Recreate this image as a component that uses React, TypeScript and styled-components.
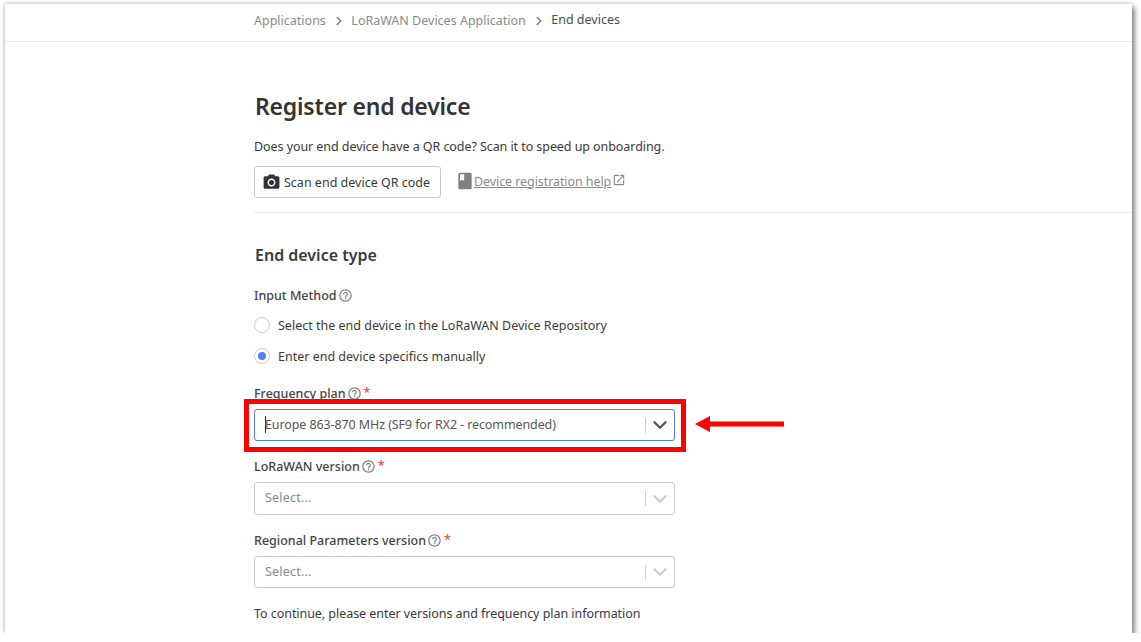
import styled, { createGlobalStyle } from 'styled-components';
import { ChevronDown, ChevronRight } from 'lucide-react';
import { MdBook, MdHelpOutline, MdOpenInNew, MdPhotoCamera } from 'react-icons/md';

const GlobalStyle = createGlobalStyle`
  html, body {
    margin: 0;
    padding: 0;
    background: #fff;
    overflow: hidden;
  }
  * { box-sizing: border-box; }
`;

const Frame = styled.div`
  width: 1127px;
  height: 629px;
  margin: 4px 0 0 5px;
  background: #fff;
  box-shadow: 3px 3px 5px rgba(0, 0, 0, 0.45), -1px -1px 4px rgba(0, 0, 0, 0.2);
  overflow: hidden;
  font-family: 'Noto Sans', sans-serif;
  font-size: 12.5px;
  color: #3a3a3a;
`;

const Breadcrumbs = styled.nav`
  height: 38px;
  padding: 9px 0 0 249px;
  border-bottom: 1px solid #e9e9e9;
  display: flex;
  align-items: flex-start;
  line-height: 16px;
`;

const Crumb = styled.span<{ $current?: boolean }>`
  color: ${p => (p.$current ? '#4a4a4a' : '#8a8a8a')};
  position: relative;
  top: ${p => (p.$current ? '-1px' : '0')};
`;

const CrumbSep = styled.span`
  display: flex;
  width: 25.5px;
  height: 16px;
  align-items: center;
  justify-content: center;
  color: #777;
`;

const Main = styled.main`
  padding-left: 249px;
`;

const Title = styled.h1`
  margin: 48px 0 0 1px;
  font-size: 23px;
  line-height: 32px;
  font-weight: 600;
  letter-spacing: -0.2px;
  color: #333;
`;

const Lead = styled.p`
  margin: 16px 0 0;
  line-height: 18px;
  letter-spacing: -0.07px;
`;

const ActionRow = styled.div`
  display: flex;
  align-items: flex-start;
  margin-top: 10px;
  padding-bottom: 14px;
  border-bottom: 1px solid #e9e9e9;
`;

const ScanButton = styled.button`
  width: 187px;
  height: 32px;
  padding: 0 0 0 7px;
  display: flex;
  align-items: center;
  gap: 3px;
  background: #fff;
  border: 1px solid #ccc;
  border-radius: 3px;
  font: inherit;
  color: #3a3a3a;
`;

const HelpLink = styled.a`
  display: flex;
  align-items: center;
  margin: 7px 0 0 14px;
  height: 16px;
  color: #8a8a8a;
`;

const HelpText = styled.span`
  margin: 0 1px 0 -1px;
  letter-spacing: -0.08px;
  text-decoration: underline;
`;

const LinkOutIcon = styled(MdOpenInNew)`
  margin-top: -3px;
`;

const SectionTitle = styled.h2`
  margin: 30px 0 0 1px;
  font-size: 16px;
  line-height: 24px;
  font-weight: 600;
  color: #3a3a3a;
`;

const Label = styled.div<{ $top: number }>`
  display: flex;
  align-items: center;
  gap: 1px;
  margin-top: ${p => p.$top}px;
  height: 18px;
  font-weight: 500;
  color: #444;
`;

const HelpIcon = styled(MdHelpOutline)`
  color: #808080;
`;

const Required = styled.span`
  margin-left: 1px;
  color: #f0484b;
  line-height: 14px;
`;

const RadioRow = styled.label<{ $top: number }>`
  display: flex;
  align-items: center;
  gap: 8px;
  height: 18px;
  margin-top: ${p => p.$top}px;
`;

const RadioCircle = styled.span<{ $checked?: boolean }>`
  width: 16px;
  height: 16px;
  border-radius: 50%;
  border: 1px solid #ccc;
  display: flex;
  align-items: center;
  justify-content: center;
  &::after {
    content: '';
    width: 8px;
    height: 8px;
    border-radius: 50%;
    background: ${p => (p.$checked ? '#5582f5' : 'transparent')};
  }
`;

const SelectBox = styled.div<{ $focused?: boolean; $top: number; $height: number }>`
  position: relative;
  width: 421px;
  height: ${p => p.$height}px;
  margin-top: ${p => p.$top}px;
  display: flex;
  align-items: center;
  border: 1px solid ${p => (p.$focused ? '#4c7cf3' : '#ccc')};
  border-radius: 3px;
  background: #fff;
`;

const SelectValue = styled.span<{ $placeholder?: boolean }>`
  flex: 1;
  padding: 0 0 2px 10px;
  color: ${p => (p.$placeholder ? '#8a8a8a' : '#555')};
  letter-spacing: ${p => (p.$placeholder ? '0.2px' : '-0.1px')};
`;

const Caret = styled.span`
  display: inline-block;
  width: 1px;
  height: 17px;
  margin-right: -1px;
  background: #333;
  vertical-align: -4px;
`;

const Indicator = styled.span<{ $focused?: boolean }>`
  display: flex;
  align-items: center;
  justify-content: center;
  width: 29px;
  height: 15px;
  border-left: 1px solid #ccc;
  color: ${p => (p.$focused ? '#555' : '#ccc')};
  svg { flex-shrink: 0; }
`;

const Highlight = styled.div`
  position: absolute;
  left: -11px;
  top: -11px;
  width: 442px;
  height: 53px;
  border: 5px solid #f00;
  pointer-events: none;
`;

const ArrowMark = styled.svg`
  position: absolute;
  left: 440px;
  top: 6px;
`;

const Footnote = styled.p`
  margin: 17px 0 0;
  line-height: 18px;
  letter-spacing: -0.05px;
`;

function Field({ label, top, height, children, focused }: {
  label: string;
  top: number;
  height: number;
  children: React.ReactNode;
  focused?: boolean;
}) {
  return (
    <>
      <Label $top={top}>
        {label}
        <HelpIcon size={15} />
        <Required>*</Required>
      </Label>
      <SelectBox $top={7} $height={height} $focused={focused}>
        {children}
        <Indicator $focused={focused}>
          <ChevronDown size={22} strokeWidth={2.6} />
        </Indicator>
      </SelectBox>
    </>
  );
}

export default function App() {
  return (
    <Frame>
      <GlobalStyle />
      <Breadcrumbs>
        <Crumb>Applications</Crumb>
        <CrumbSep><ChevronRight size={14} strokeWidth={2.4} /></CrumbSep>
        <Crumb>LoRaWAN Devices Application</Crumb>
        <CrumbSep><ChevronRight size={14} strokeWidth={2.4} /></CrumbSep>
        <Crumb $current>End devices</Crumb>
      </Breadcrumbs>
      <Main>
        <Title>Register end device</Title>
        <Lead>Does your end device have a QR code? Scan it to speed up onboarding.</Lead>
        <ActionRow>
          <ScanButton>
            <MdPhotoCamera size={19} color="#333" />
            Scan end device QR code
          </ScanButton>
          <HelpLink>
            <MdBook size={20} color="#808080" />
            <HelpText>Device registration help</HelpText>
            <LinkOutIcon size={14} />
          </HelpLink>
        </ActionRow>
        <SectionTitle>End device type</SectionTitle>
        <Label $top={19}>
          Input Method
          <HelpIcon size={15} />
        </Label>
        <RadioRow $top={12}>
          <RadioCircle />
          Select the end device in the LoRaWAN Device Repository
        </RadioRow>
        <RadioRow $top={13}>
          <RadioCircle $checked />
          Enter end device specifics manually
        </RadioRow>
        <Field label="Frequency plan" top={19} height={32} focused>
          <SelectValue><Caret />Europe 863-870 MHz (SF9 for RX2 - recommended)</SelectValue>
          <Highlight />
          <ArrowMark width="89" height="16" viewBox="0 0 89 16">
            <path d="M0 8 L15 0 L15 5.5 L89 5.5 L89 10.5 L15 10.5 L15 16 Z" fill="#f00" />
          </ArrowMark>
        </Field>
        <Field label="LoRaWAN version" top={16} height={33}>
          <SelectValue $placeholder>Select...</SelectValue>
        </Field>
        <Field label="Regional Parameters version" top={16} height={32}>
          <SelectValue $placeholder>Select...</SelectValue>
        </Field>
        <Footnote>To continue, please enter versions and frequency plan information</Footnote>
      </Main>
    </Frame>
  );
}
